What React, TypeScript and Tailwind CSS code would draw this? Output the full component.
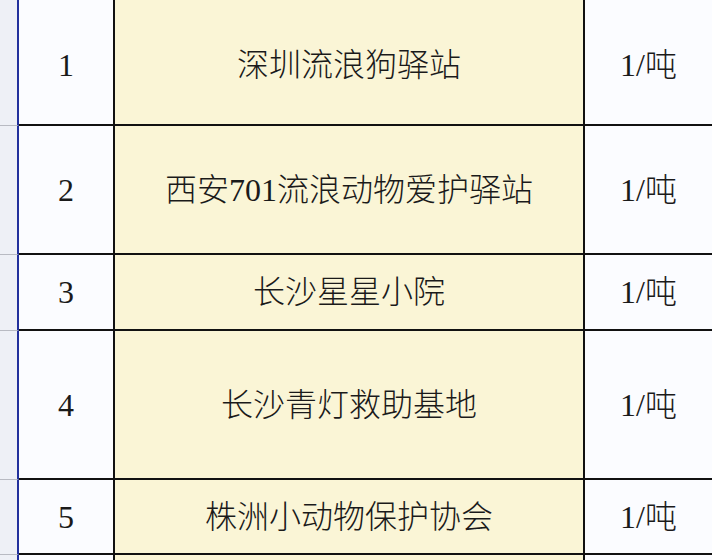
import React from 'react';

const rows = [
  { no: '1', name: '深圳流浪狗驿站', qty: '1/吨', h: 'h-[126px]', pad: 'pt-[6px]' },
  { no: '2', name: '西安701流浪动物爱护驿站', qty: '1/吨', h: 'h-[129px]', pad: '' },
  { no: '3', name: '长沙星星小院', qty: '1/吨', h: 'h-[76px]', pad: '' },
  { no: '4', name: '长沙青灯救助基地', qty: '1/吨', h: 'h-[149px]', pad: '' },
  { no: '5', name: '株洲小动物保护协会', qty: '1/吨', h: 'h-[75px]', pad: '' },
  { no: '', name: '', qty: '', h: 'h-[80px]', pad: '' },
];

const App = () => {
  return (
    <div
      className="w-[712px] h-[560px] overflow-hidden bg-[#fbfcff] text-[#1a1a1a] text-[32px] font-light leading-none"
      style={{ fontFamily: '"Liberation Serif", "Noto Sans CJK SC", serif' }}
    >
      {rows.map((r, i) => (
        <div key={i} className={`flex ${r.h}`}>
          {/* row header strip */}
          <div className="w-[19px] shrink-0 bg-[#eef0f6] border-r-2 border-r-[#22309c] border-b border-b-[#b8bac2]" />
          <div className={`w-[96px] shrink-0 flex items-center justify-center border-r-2 border-b-2 border-[#111] ${r.pad}`}>
            {r.no}
          </div>
          <div className={`w-[470px] shrink-0 flex items-center justify-center bg-[#faf5d6] border-r-2 border-b-2 border-[#111] ${r.pad}`}>
            {r.name}
          </div>
          <div className={`flex-1 flex items-center justify-center border-b-2 border-[#111] ${r.pad}`}>
            {r.qty}
          </div>
        </div>
      ))}
    </div>
  );
};

export default App;
